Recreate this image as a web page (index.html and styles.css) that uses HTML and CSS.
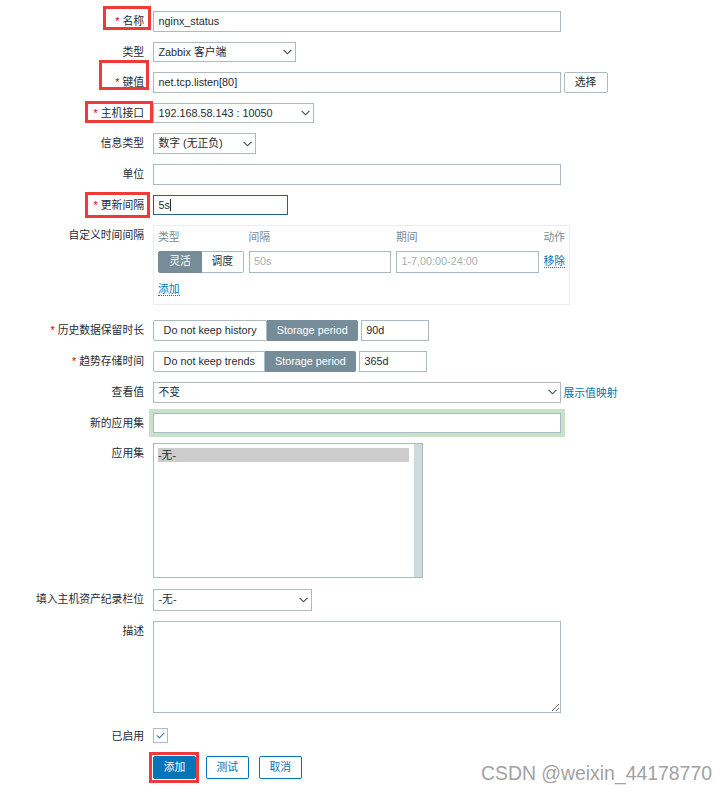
FILE: index.html
```html
<!DOCTYPE html>
<html lang="zh">
<head>
<meta charset="utf-8">
<title>监控项</title>
<link rel="stylesheet" href="styles.css">
</head>
<body>
<div class="page">
  <div class="form">
    <div class="row">
      <div class="lbl req">名称</div>
      <div class="field w-full">nginx_status</div>
    </div>
    <div class="row">
      <div class="lbl">类型</div>
      <div class="field select w-type"><span>Zabbix 客户端</span><svg class="chev" width="9" height="6" viewBox="0 0 9 6"><path d="M0.6 0.8 L4.5 4.8 L8.4 0.8" /></svg></div>
    </div>
    <div class="row">
      <div class="lbl req">键值</div>
      <div class="ctl-line">
        <div class="field w-full">net.tcp.listen[80]</div>
        <div class="btn-grey">选择</div>
      </div>
    </div>
    <div class="row">
      <div class="lbl req">主机接口</div>
      <div class="field select w-host"><span>192.168.58.143 : 10050</span><svg class="chev" width="9" height="6" viewBox="0 0 9 6"><path d="M0.6 0.8 L4.5 4.8 L8.4 0.8" /></svg></div>
    </div>
    <div class="row">
      <div class="lbl">信息类型</div>
      <div class="field select w-info"><span>数字 (无正负)</span><svg class="chev" width="9" height="6" viewBox="0 0 9 6"><path d="M0.6 0.8 L4.5 4.8 L8.4 0.8" /></svg></div>
    </div>
    <div class="row">
      <div class="lbl">单位</div>
      <div class="field w-full"></div>
    </div>
    <div class="row">
      <div class="lbl req">更新间隔</div>
      <div class="field focus w-update">5s<span class="caret"></span></div>
    </div>
    <div class="row">
      <div class="lbl">自定义时间间隔</div>
      <div class="interval-box">
        <div class="iv-grid">
          <div class="iv-head">类型</div>
          <div class="iv-head">间隔</div>
          <div class="iv-head">期间</div>
          <div class="iv-head iv-right">动作</div>
          <div class="seg">
            <div class="seg-item on w-flex">灵活</div>
            <div class="seg-item w-sched">调度</div>
          </div>
          <div class="field ph">50s</div>
          <div class="field ph">1-7,00:00-24:00</div>
          <div class="iv-action"><span class="link dotted">移除</span></div>
        </div>
        <div class="iv-add"><span class="link dotted">添加</span></div>
      </div>
    </div>
    <div class="row row-history">
      <div class="lbl req">历史数据保留时长</div>
      <div class="ctl-line">
        <div class="seg seg-tall">
          <div class="seg-item wide">Do not keep history</div>
          <div class="seg-item wide on">Storage period</div>
        </div>
        <div class="field tall w-small">90d</div>
      </div>
    </div>
    <div class="row">
      <div class="lbl req">趋势存储时间</div>
      <div class="ctl-line">
        <div class="seg seg-tall">
          <div class="seg-item wide">Do not keep trends</div>
          <div class="seg-item wide on">Storage period</div>
        </div>
        <div class="field tall w-small">365d</div>
      </div>
    </div>
    <div class="row">
      <div class="lbl">查看值</div>
      <div class="ctl-line">
        <div class="field select w-full"><span>不变</span><svg class="chev" width="9" height="6" viewBox="0 0 9 6"><path d="M0.6 0.8 L4.5 4.8 L8.4 0.8" /></svg></div>
        <span class="link">展示值映射</span>
      </div>
    </div>
    <div class="row">
      <div class="lbl">新的应用集</div>
      <div class="field w-full hl"></div>
    </div>
    <div class="row">
      <div class="lbl">应用集</div>
      <div class="listbox">
        <div class="lb-items"><div class="lb-opt">-无-</div></div>
        <div class="lb-scroll"></div>
      </div>
    </div>
    <div class="row row-inv">
      <div class="lbl">填入主机资产纪录栏位</div>
      <div class="field select inv w-inv"><span>-无-</span><svg class="chev" width="9" height="6" viewBox="0 0 9 6"><path d="M0.6 0.8 L4.5 4.8 L8.4 0.8" /></svg></div>
    </div>
    <div class="row">
      <div class="lbl">描述</div>
      <textarea class="area"></textarea>
    </div>
    <div class="row row-check">
      <div class="lbl">已启用</div>
      <div class="check"><svg width="15" height="15" viewBox="0 0 15 15"><path d="M3.8 7.4 L6.4 10 L11.2 4.9" /></svg></div>
    </div>
    <div class="row">
      <div class="lbl"></div>
      <div class="buttons">
        <div class="btn primary">添加</div>
        <div class="btn outline">测试</div>
        <div class="btn outline">取消</div>
      </div>
    </div>
  </div>

  <div class="mark m-name"></div>
  <div class="mark m-key"></div>
  <div class="mark m-host"></div>
  <div class="mark m-update"></div>
  <div class="mark m-add"></div>

  <div class="watermark">CSDN @weixin_44178770</div>
</div>
</body>
</html>
```

FILE: styles.css
```css
* { box-sizing: border-box; }

body {
  margin: 0;
  background: #ffffff;
  font-family: "Liberation Sans", "Noto Sans CJK SC", sans-serif;
  font-size: 10.8px;
  color: #1f2c33;
}

.page {
  position: relative;
  width: 727px;
  height: 792px;
  overflow: hidden;
}

.form {
  display: flex;
  flex-direction: column;
  gap: 10px;
  padding-top: 11px;
}

.row {
  display: flex;
  align-items: flex-start;
  gap: 9px;
}

.lbl {
  width: 144px;
  flex: none;
  text-align: right;
  line-height: 20.6px;
  white-space: nowrap;
}

.req::before {
  content: "*";
  color: #d40000;
  margin-right: 3px;
}

.field {
  height: 20.6px;
  border: 1px solid #acbbc2;
  background: #ffffff;
  padding: 0 4.5px;
  line-height: 18.6px;
  white-space: nowrap;
  overflow: hidden;
  flex: none;
}

.field.tall { height: 21px; line-height: 19px; }
.field.inv { height: 21.6px; line-height: 19.6px; }

.select {
  display: flex;
  align-items: center;
  justify-content: space-between;
  padding-right: 3px;
}

.chev { flex: none; }
.chev path { fill: none; stroke: #3b4a52; stroke-width: 1.1; }

.w-full { width: 408px; }
.w-type { width: 142.5px; }
.w-host { width: 161px; }
.w-info { width: 102.5px; }
.w-update { width: 135px; }
.w-inv { width: 158.5px; }
.w-small { width: 68px; }

.focus {
  border-color: #24618f;
  display: flex;
  align-items: center;
}

.caret {
  display: inline-block;
  width: 1px;
  height: 12px;
  background: #1f2c33;
  margin-left: 0.5px;
}

.ctl-line {
  display: flex;
  align-items: center;
  gap: 2.5px;
}

.btn-grey {
  height: 20.6px;
  width: 44px;
  border: 1px solid #acbbc2;
  border-radius: 2px;
  background: #ffffff;
  text-align: center;
  line-height: 18.6px;
}

/* custom intervals */
.interval-box {
  width: 417px;
  height: 80px;
  border: 1px solid #ebeef0;
  padding: 5px 4px 9px 4px;
}

.iv-grid {
  display: grid;
  grid-template-columns: 85.5px 142.5px 142.5px 1fr;
  column-gap: 5px;
  row-gap: 7px;
}

.iv-head {
  color: #768d99;
  line-height: 13px;
  height: 13px;
}

.iv-right { text-align: right; }

.iv-grid .field { width: 100%; height: 21.4px; line-height: 19.4px; }

.ph { color: #a3afb5; }

.iv-action {
  display: flex;
  align-items: center;
  justify-content: flex-end;
}

.iv-add {
  margin-top: 10px;
  line-height: 12px;
  height: 13px;
}

.link { color: #0275b8; white-space: nowrap; }
.dotted {
  display: inline-block;
  line-height: 12px;
  border-bottom: 1px dotted #0275b8;
}

.seg {
  display: flex;
  height: 21.4px;
}

.seg-tall { height: 21px; }

.seg-item {
  border: 1px solid #acbbc2;
  background: #ffffff;
  text-align: center;
  line-height: 19px;
  white-space: nowrap;
}

.seg-item:first-child { border-radius: 2px 0 0 2px; }
.seg-item:last-child { border-radius: 0 2px 2px 0; }
.seg-item + .seg-item { border-left: none; }

.seg-item.on {
  background: #768d99;
  border-color: #768d99;
  color: #ffffff;
}

.w-flex { width: 44.5px; }
.w-sched { width: 41.5px; }
.seg-item.wide { padding: 0 9.6px; }

.row-history { margin-top: 5px; }

.hl { box-shadow: 0 0 0 4px #c6e2c8; }

/* listbox */
.listbox {
  width: 270px;
  height: 135px;
  border: 1px solid #acbbc2;
  display: flex;
  flex: none;
}

.lb-items {
  flex: 1;
  padding: 3.7px 5px 0 4px;
}

.lb-opt {
  background: #cccccc;
  height: 14.3px;
  line-height: 14.3px;
}

.lb-scroll {
  width: 8px;
  background: #d0d9de;
}

.row-inv { margin-top: 0.6px; }

.area {
  width: 408px;
  height: 92.5px;
  border: 1px solid #acbbc2;
  border-radius: 0;
  background: #ffffff;
  margin: 0;
  padding: 4px;
  font: inherit;
  outline: none;
}

.row-check {
  margin-top: 2.5px;
  align-items: center;
}

.check {
  width: 14.7px;
  height: 14.7px;
  border: 1px solid #acbbc2;
  background: #ffffff;
  display: flex;
  align-items: center;
  justify-content: center;
}

.check svg { flex: none; }
.check path { fill: none; stroke: #3a86bd; stroke-width: 1.2; }

.buttons {
  display: flex;
  gap: 9.5px;
}

.btn {
  height: 23px;
  width: 43px;
  border: 1px solid #0275b8;
  border-radius: 2px;
  text-align: center;
  line-height: 21px;
}

.btn.primary { background: #0275b8; color: #ffffff; }
.btn.outline { background: #ffffff; color: #0275b8; width: 43.5px; }

/* red annotation boxes drawn over the screenshot */
.mark {
  position: absolute;
  border: 3px solid #f03a3a;
}

.m-name { left: 103px; top: 6px; width: 48px; height: 23.5px; }
.m-key { left: 99px; top: 59.5px; width: 50px; height: 30.5px; }
.m-host { left: 85px; top: 101px; width: 67.5px; height: 21.5px; }
.m-update { left: 85px; top: 191.7px; width: 64.5px; height: 26.7px; }
.m-add { left: 149px; top: 752px; width: 50px; height: 31px; }

.watermark {
  position: absolute;
  left: 481px;
  top: 763.5px;
  font-family: "Liberation Sans", sans-serif;
  font-size: 19.4px;
  line-height: 19.4px;
  color: #a2a2a2;
  text-shadow: 0 0 1px #ffffff, 1px 1px 0 #ffffff;
  white-space: nowrap;
}
```
